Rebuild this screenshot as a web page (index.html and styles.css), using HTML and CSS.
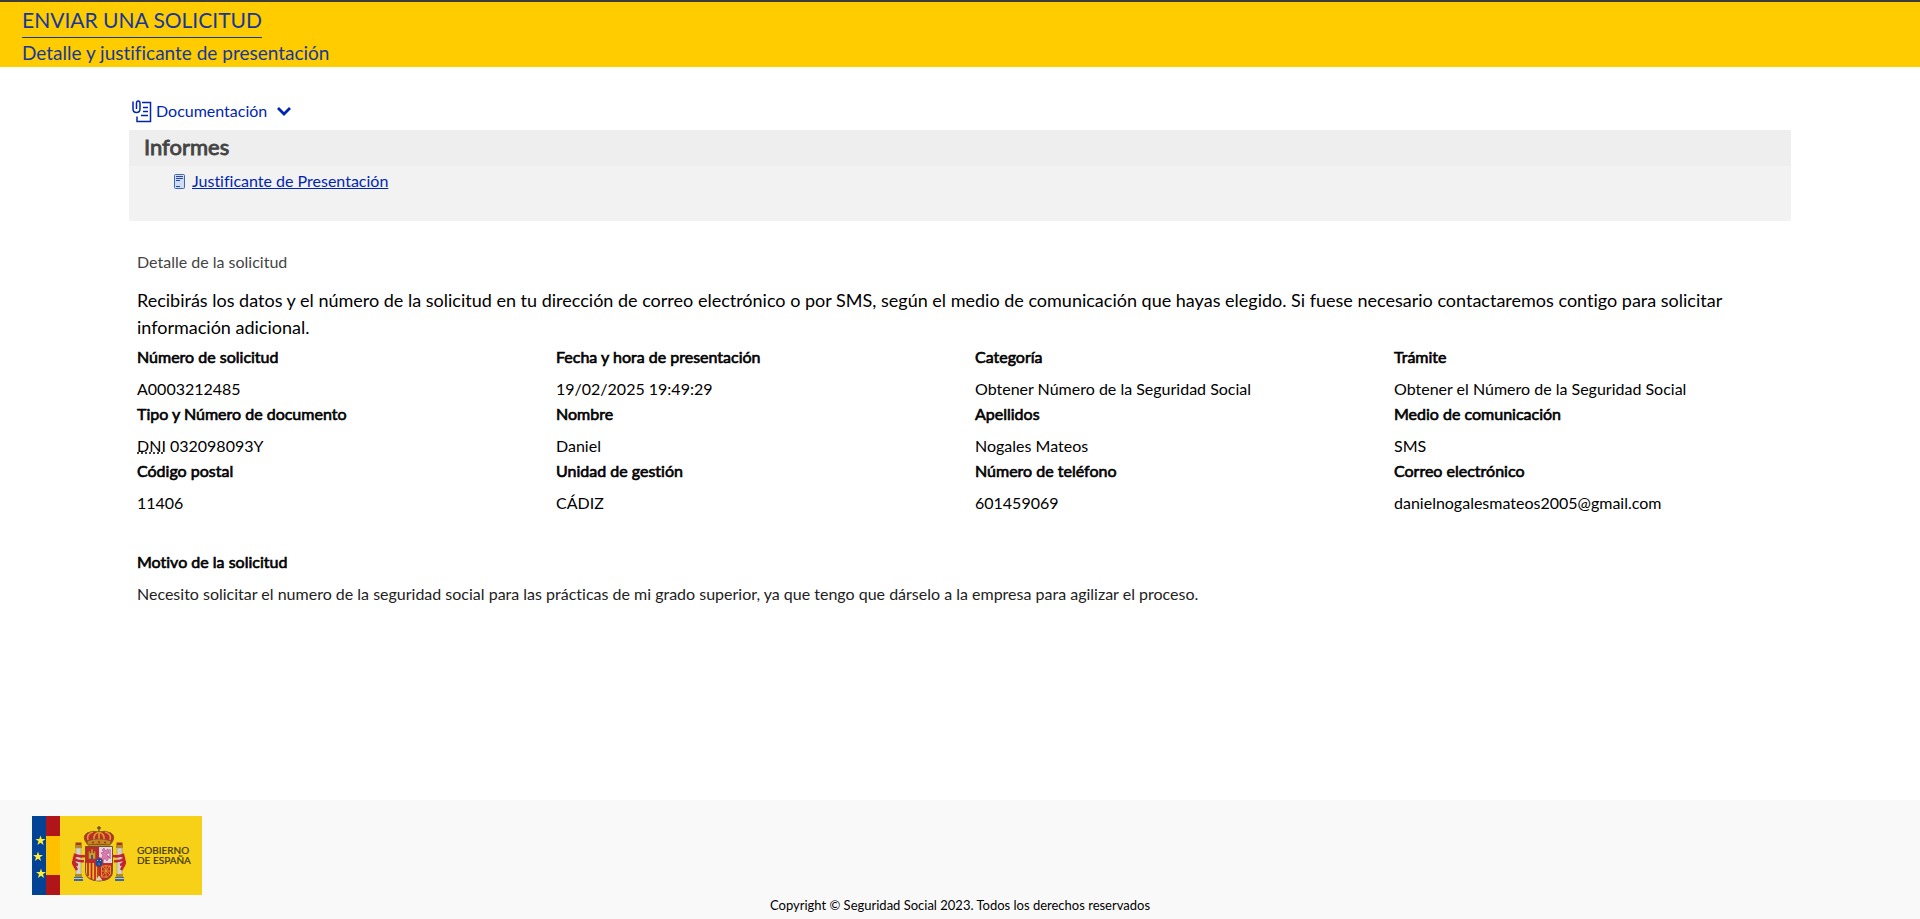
FILE: index.html
```html
<!DOCTYPE html>
<html lang="es">
<head>
<meta charset="utf-8">
<title>Enviar una solicitud</title>
<meta name="viewport" content="width=device-width, initial-scale=1">
<link rel="stylesheet" href="styles.css">
</head>
<body>
<header class="page-header">
  <h1 class="page-title">ENVIAR UNA SOLICITUD</h1>
  <p class="page-subtitle">Detalle y justificante de presentación</p>
</header>

<main class="content">
  <button class="docs-toggle" type="button" aria-expanded="true" aria-controls="docs">
    <svg class="docs-icon" viewBox="0 0 20 23" aria-hidden="true">
      <path d="M1 1.500v7.500q0 3.500 3.500 3.500T8 9V3.500Q8 1 6.200 1T4.500 3.500V9M10 2.500h8.500v19H5v-5M11 7.500h5M11 11.500h5M9 15.500h7"/>
    </svg>
    <span>Documentación</span>
    <svg class="chevron" viewBox="0 0 14 9" aria-hidden="true"><path d="M1 1l6 6 6-6"/></svg>
  </button>

  <section class="docs" id="docs">
    <h2 class="docs-title">Informes</h2>
    <div class="docs-body">
      <svg class="report-icon" viewBox="0 0 11 15" aria-hidden="true">
        <rect class="sheet" x=".5" y=".5" width="10" height="14" rx="1"/>
        <path class="lines" d="M2 2.500h7M2 4.500h7M2 6.500h4M2 12.500h4"/>
      </svg>
      <a class="docs-link" href="#justificante">Justificante de Presentación</a>
    </div>
  </section>

  <section class="detail">
    <h2 class="detail-title">Detalle de la solicitud</h2>
    <p class="intro">Recibirás los datos y el número de la solicitud en tu dirección de correo electrónico o por SMS, según el medio de comunicación que hayas elegido. Si fuese necesario contactaremos contigo para solicitar información adicional.</p>
    <dl class="fields">
      <div class="field"><dt>Número de solicitud</dt><dd>A0003212485</dd></div>
      <div class="field"><dt>Fecha y hora de presentación</dt><dd>19/02/2025 19:49:29</dd></div>
      <div class="field"><dt>Categoría</dt><dd>Obtener Número de la Seguridad Social</dd></div>
      <div class="field"><dt>Trámite</dt><dd>Obtener el Número de la Seguridad Social</dd></div>
      <div class="field"><dt>Tipo y Número de documento</dt><dd><abbr title="Documento Nacional de Identidad">DNI</abbr> 032098093Y</dd></div>
      <div class="field"><dt>Nombre</dt><dd>Daniel</dd></div>
      <div class="field"><dt>Apellidos</dt><dd>Nogales Mateos</dd></div>
      <div class="field"><dt>Medio de comunicación</dt><dd>SMS</dd></div>
      <div class="field"><dt>Código postal</dt><dd>11406</dd></div>
      <div class="field"><dt>Unidad de gestión</dt><dd>CÁDIZ</dd></div>
      <div class="field"><dt>Número de teléfono</dt><dd>601459069</dd></div>
      <div class="field"><dt>Correo electrónico</dt><dd>danielnogalesmateos2005@gmail.com</dd></div>
    </dl>
    <dl class="reason">
      <div class="field"><dt>Motivo de la solicitud</dt><dd>Necesito solicitar el numero de la seguridad social para las prácticas de mi grado superior, ya que tengo que dárselo a la empresa para agilizar el proceso.</dd></div>
    </dl>
  </section>
</main>

<footer class="page-footer">
  <svg class="gov-logo" viewBox="0 0 170 79" role="img" aria-label="Gobierno de España">
    <defs>
      <path id="star" d="M0-5l1.200 3.500 3.800.1-3 2.200 1.100 3.600L0 2.300-3.100 4.400-2 .8-5-1.400l3.800-.1z"/>
      <g id="pillar">
        <rect x="43.500" y="26.500" width="6" height="3" fill="#a33a1c"/>
        <rect x="43" y="29" width="7" height="3" fill="#b58a1a"/>
        <rect x="44" y="32" width="5" height="27" fill="#d5d2c8" stroke="#9d9685" stroke-width=".6"/>
        <rect x="43" y="58" width="7" height="3" fill="#b58a1a"/>
        <rect x="42" y="61" width="9" height="4" fill="#3d6b9a"/>
        <path d="M42 62.500h9" stroke="#b9cbd0"/>
        <path d="M53 40q-5 1-10-1l-1 4q5 3 10 2M43 43q-3 3-1 6l3 5M42 44q0 4 4 5" fill="none" stroke="#c4242f" stroke-width="2.600"/>
      </g>
    </defs>
    <rect width="170" height="79" fill="#f7d117"/>
    <rect width="14" height="79" fill="#034396"/>
    <rect x="14" width="14" height="79" fill="#b01519"/>
    <rect x="14" y="20" width="14" height="39" fill="#ffc000"/>
    <g fill="#ffee35"><use href="#star" x="8.500" y="24.500"/><use href="#star" x="6" y="40.500"/><use href="#star" x="9" y="57.500"/></g>
    <use href="#pillar"/>
    <use href="#pillar" transform="translate(134 0) scale(-1 1)"/>
    <path d="M56 29q-7-8-1-12 6-3 12-1 6-2 12 1 6 4-1 12z" fill="#c02b2e" stroke="#8c5a1b"/>
    <path d="M56 24q-2-6 5-8M62 24q-1-6 5-8 6 2 5 8M78 24q2-6-5-8M67 15v10" fill="none" stroke="#d79c23" stroke-width="1.700"/>
    <path d="M55 25q12-4 24 0l-1 4q-11-2-22 0z" fill="#c18a1f" stroke="#80591f" stroke-width=".7"/>
    <path d="M67 10v6M65 12h4" stroke="#61521d" stroke-width="1.300"/>
    <path d="M60 26.500h2M66 26h2M72 26.500h2" stroke="#b52028" stroke-width="1.400"/>
    <path d="M53.500 30.500h27v25q0 9-13.500 9.500-13.500-.5-13.500-9.500z" fill="#c5252d" stroke="#765422"/>
    <path d="M67 31h13v16H67z" fill="#ddd8e2"/>
    <path d="M54 47h13v17.500q-13-1-13-9z" fill="#f0bd22"/>
    <path d="M56 47v13M59.500 47v16M63 47v17M66 47v17" stroke="#be2427" stroke-width="1.700"/>
    <path d="M56.500 43h7v-8h-1.500v2H61v-4h-2v4h-1v-2h-1.500z" fill="#d89b20" stroke="#75571d" stroke-width=".5"/>
    <path d="M59 39v4h2v-4" fill="#315d9c"/>
    <path d="M70 34l2-2 1 3 3-2 1 4-3 1 3 3-2 4-2-3-2 3-2-1 2-5-2-2 3-1z" fill="#dd7bb0" stroke="#b84582" stroke-width=".6"/>
    <path d="M78 33v9l-3-2" fill="none" stroke="#cc5d9b" stroke-width="1.300"/>
    <path d="M69.500 50h9v8l-3 3h-6zM70 50l8 9M78 50l-8 10M74 49v13M69 55h10" fill="none" stroke="#d69b25"/>
    <ellipse cx="67" cy="46.500" rx="4" ry="4.700" fill="#174d9c" stroke="#bd2a3d"/>
    <path d="M65 44.500h1M68 44.500h1M66.500 48h1" stroke="#cfc25a" stroke-width="1.200"/>
    <path d="M63.500 64.500l3.500-5 3.500 5z" fill="#d9d5ba"/>
    <text class="logo-text" x="105" y="38">GOBIERNO</text>
    <text class="logo-text" x="105" y="48">DE ESPAÑA</text>
  </svg>
  <p class="copyright">Copyright © Seguridad Social 2023. Todos los derechos reservados</p>
</footer>
</body>
</html>
```
FILE: styles.css
```css
* { box-sizing: border-box; }

body {
  margin: 0;
  min-height: 100vh;
  display: flex;
  flex-direction: column;
  background: #fff;
  color: #000;
  font: 16px/24px Lato, sans-serif;
  font-variant-ligatures: none;
}

h1, h2, p, dl, dd { margin: 0; }

.page-header {
  padding: 4px 22px 0;
  background: #fc0;
  border-top: 2px solid #3c3c3c;
  color: #17389b;
}

.page-title {
  width: fit-content;
  padding-bottom: 3px;
  border-bottom: 1px solid #17389b;
  font-size: 21px;
  font-weight: 400;
  line-height: 28px;
}

.page-subtitle {
  font-size: 19px;
  line-height: 29px;
}

.content {
  flex: 1;
  padding: 32px 129px 40px;
}

.docs-toggle {
  display: flex;
  align-items: center;
  height: 24px;
  margin-bottom: 7px;
  padding: 0 3px;
  border: 0;
  background: none;
  color: #0026b0;
  font: inherit;
  font-variant-ligatures: none;
  cursor: pointer;
}

.docs-icon { width: 20px; height: 23px; margin-right: 4px; }
.chevron { width: 14px; height: 9px; margin-left: 10px; }

.docs-icon path,
.chevron path {
  fill: none;
  stroke: currentColor;
  stroke-width: 1.5;
}

.chevron path { stroke-width: 2.8; }

.docs {
  background: #f2f2f2;
}

.docs-title {
  padding: 0 15px 2px;
  background: #eee;
  color: #444;
  font-size: 22px;
  font-weight: 400;
  line-height: 34px;
  -webkit-text-stroke: 0.04em;
}

.docs-body {
  display: flex;
  align-items: center;
  gap: 7px;
  padding: 3px 45px 28px;
}

.report-icon { width: 11px; height: 15px; }
.report-icon .sheet { fill: #cfdcf2; stroke: #3d68b5; }
.report-icon .lines { stroke: #2845ad; }

.docs-link { color: #0026b0; }

.detail { padding: 29px 8px 0; }

.detail-title {
  color: #444;
  font-size: 16px;
  font-weight: 400;
  line-height: 24px;
}

.intro {
  margin-top: 13px;
  font-size: 18px;
  line-height: 27px;
}

.fields {
  display: grid;
  grid-template-columns: repeat(4, 1fr);
  column-gap: 30px;
  margin-top: 4px;
}

.field dt {
  line-height: 24px;
  -webkit-text-stroke: 0.04em;
}

.field dd {
  margin-top: 7px;
  line-height: 26px;
}

.reason { margin-top: 34px; }
.reason dd { color: #222; }

.page-footer {
  padding: 16px 32px 4px;
  background: #f9f9f9;
}

.gov-logo { display: block; width: 170px; height: 79px; }

.logo-text {
  fill: #3c3510;
  stroke: #3c3510;
  stroke-width: 0.2;
  font: 10px Lato, sans-serif;
}

.copyright {
  font-size: 13px;
  line-height: 20px;
  text-align: center;
}
```
